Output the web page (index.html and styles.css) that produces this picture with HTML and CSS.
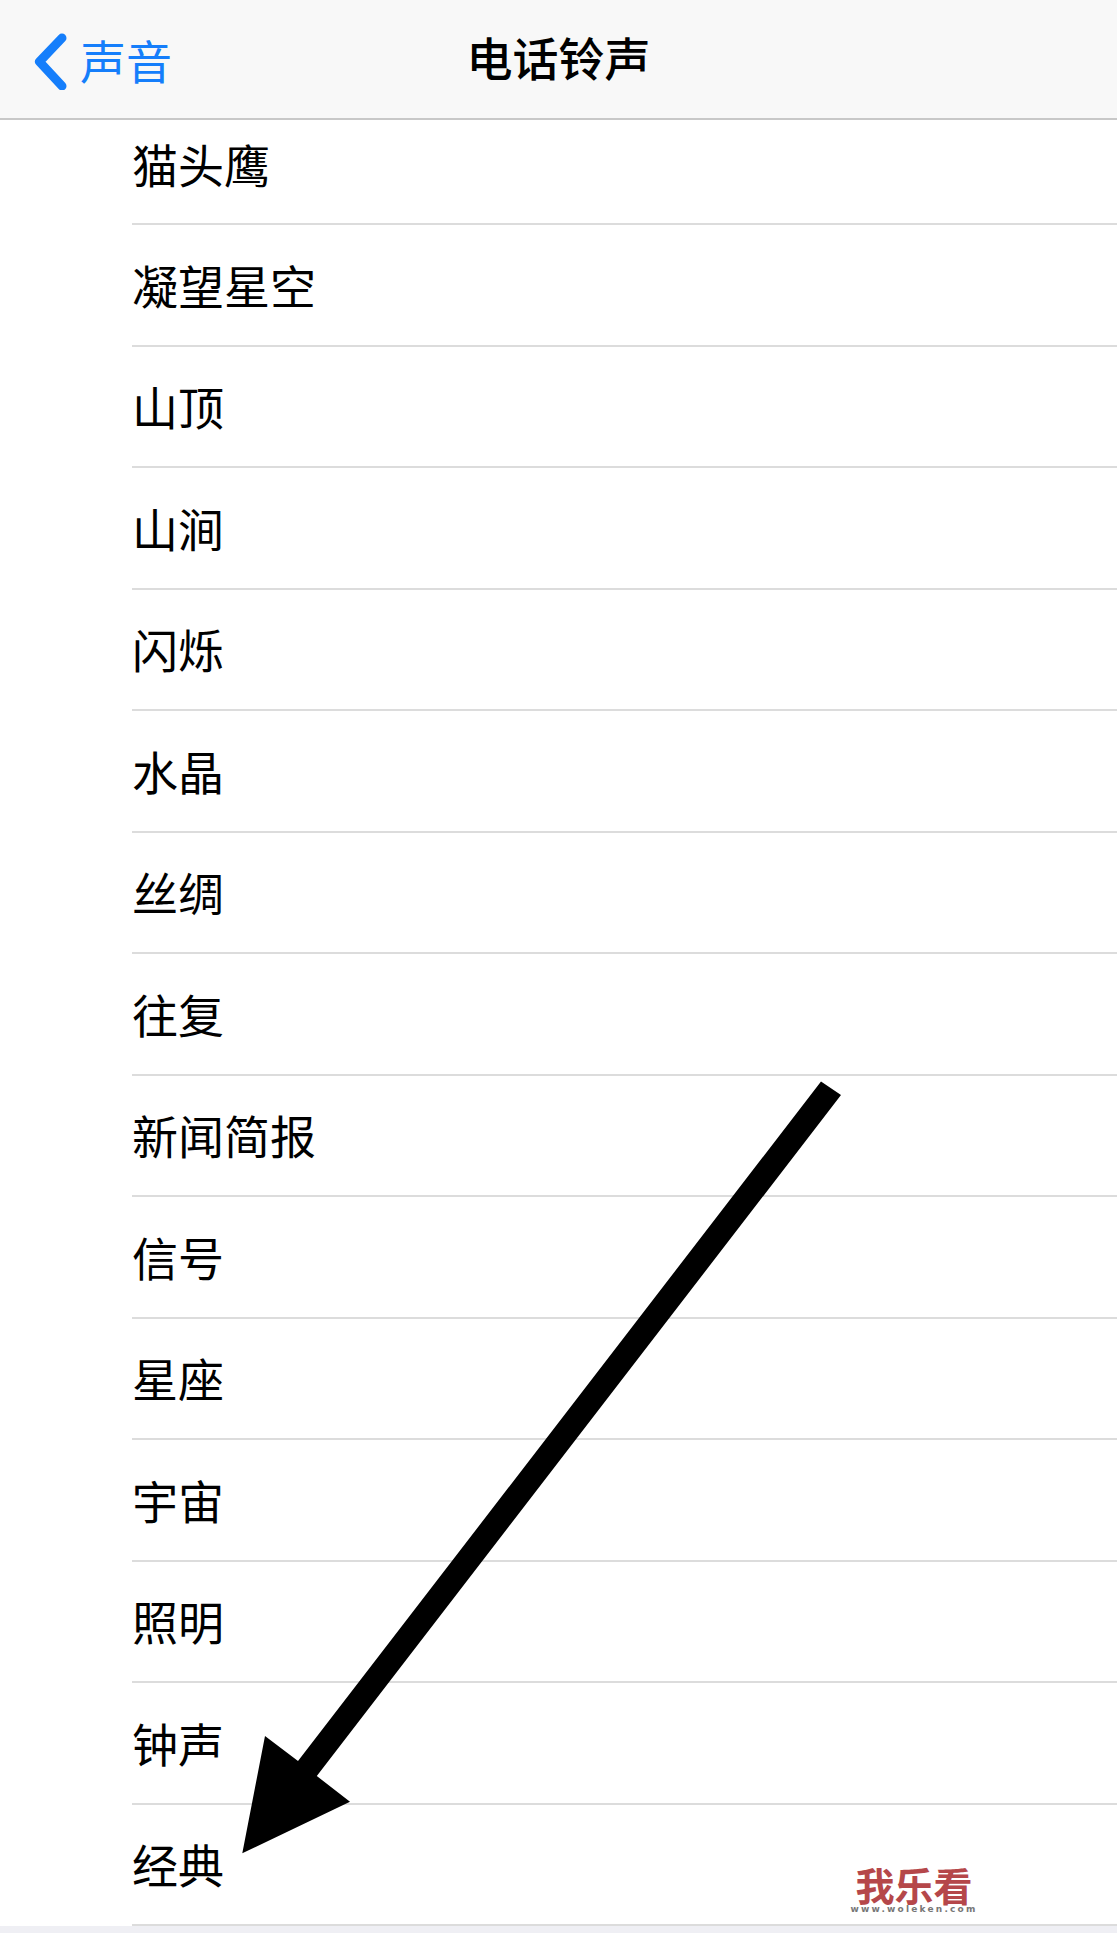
FILE: index.html
```html
<!DOCTYPE html>
<html lang="zh-CN">
<head>
    <meta charset="UTF-8" />
    <meta name="viewport" content="width=device-width, initial-scale=1" />
    <title>电话铃声</title>
    <link rel="stylesheet" href="styles.css">
</head>
<body>
    <header class="nav-bar">
        <a class="back-link" href="#">
            <svg class="back-icon" viewBox="0 0 34 58" aria-hidden="true">
                <path d="M29 6 L6.5 29.7 L29 54" />
            </svg>
            <span class="back-label">声音</span>
        </a>
        <div class="nav-title">电话铃声</div>
    </header>

    <ul class="tone-list">
        <li class="tone first">猫头鹰</li>
        <li class="tone">凝望星空</li>
        <li class="tone">山顶</li>
        <li class="tone">山涧</li>
        <li class="tone">闪烁</li>
        <li class="tone">水晶</li>
        <li class="tone">丝绸</li>
        <li class="tone">往复</li>
        <li class="tone">新闻简报</li>
        <li class="tone">信号</li>
        <li class="tone">星座</li>
        <li class="tone">宇宙</li>
        <li class="tone">照明</li>
        <li class="tone">钟声</li>
        <li class="tone">经典</li>
    </ul>

    <!-- annotation drawn over the screenshot -->
    <svg class="arrow" viewBox="0 0 1117 1933" aria-hidden="true">
        <polygon points="821,1081.5 841,1095 316.8,1776 350,1801.7 242.3,1853.3 265,1736 298,1761" />
    </svg>

    <div class="watermark">
        <div class="wm-name">我乐看</div>
        <div class="wm-url">www.woleken.com</div>
    </div>
</body>
</html>
```

FILE: styles.css
```css
html, body {
    margin: 0;
    padding: 0;
}

body {
    position: relative;
    height: 1933px;
    overflow: hidden;
    background-color: #efeff4;
    color: #000;
    font-family: "Noto Sans CJK SC", "Noto Sans", sans-serif;
}

.nav-bar {
    position: relative;
    display: flex;
    align-items: center;
    justify-content: center;
    box-sizing: border-box;
    height: 120px;
    padding-bottom: 7px;
    background-color: #f8f8f8;
    border-bottom: 2px solid #c8c8c8;
}

.back-link {
    position: absolute;
    left: 33px;
    top: 30px;
    display: flex;
    align-items: center;
    gap: 13px;
    color: #157efb;
    font-size: 46px;
    line-height: 58px;
    text-decoration: none;
}

.back-label {
    padding-bottom: 4px;
}

.back-icon {
    width: 34px;
    height: 58px;
}

.back-icon path {
    fill: none;
    stroke: #157efb;
    stroke-width: 9;
    stroke-linecap: round;
    stroke-linejoin: round;
}

.nav-title {
    font-size: 46px;
    font-weight: 500;
    line-height: 58px;
}

.tone-list {
    margin: 0;
    padding: 0;
    list-style: none;
    background-color: #fff;
}

.tone {
    box-sizing: border-box;
    display: flex;
    align-items: center;
    height: 121.5px;
    margin-left: 132px;
    padding-bottom: 2px;
    border-bottom: 2px solid #dcdcdc;
    font-size: 46px;
}

.tone.first {
    height: 105px;
    padding-bottom: 18px;
}

.arrow {
    position: absolute;
    left: 0;
    top: 0;
    width: 1117px;
    height: 1933px;
}

.watermark {
    position: absolute;
    left: 849px;
    top: 1864px;
    width: 130px;
    text-align: center;
}

.wm-name {
    color: #b5474a;
    font-size: 39px;
    font-weight: 700;
    line-height: 40px;
}

.wm-url {
    color: #777;
    font-family: "DejaVu Sans", sans-serif;
    font-size: 9px;
    font-weight: 700;
    letter-spacing: 2.2px;
    line-height: 10px;
    white-space: nowrap;
}
```
